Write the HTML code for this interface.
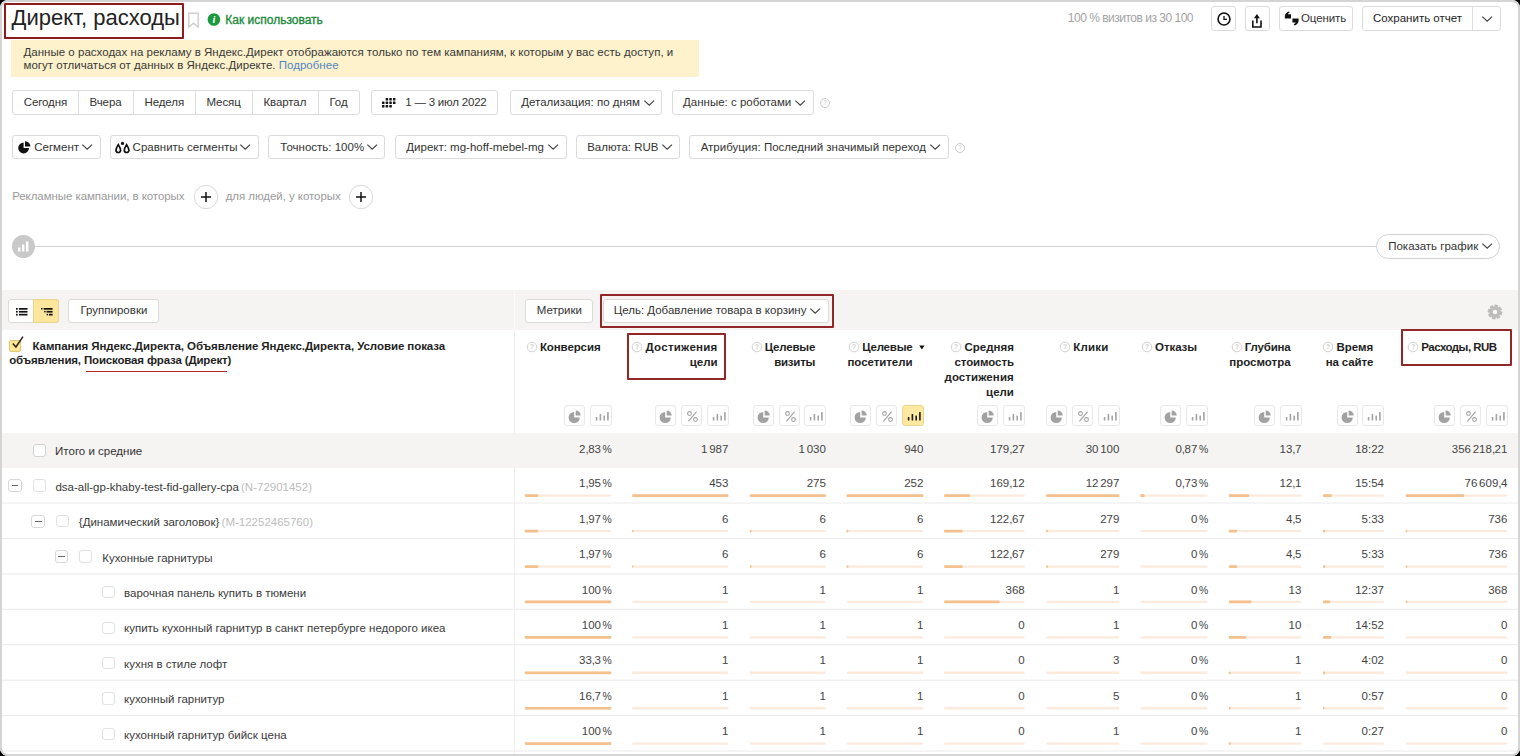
<!DOCTYPE html>
<html><head><meta charset="utf-8"><title>Директ, расходы</title>
<style>
html,body{margin:0;padding:0;background:#000;}
body{width:1520px;height:756px;overflow:hidden;position:relative;font-family:"Liberation Sans",sans-serif;}
#frame{position:absolute;left:0;top:0;width:1520px;height:756px;background:#fff;border-radius:8px;overflow:hidden;}
#edge{position:absolute;left:0;top:0;width:1520px;height:756px;box-sizing:border-box;border:2px solid #d4d4d4;border-radius:8px;}
.t{position:absolute;white-space:nowrap;font-family:"Liberation Sans",sans-serif;}
.b{position:absolute;box-sizing:border-box;background:#fff;border:1px solid #dbdbdb;border-radius:3px;}
.r{position:absolute;}
i{font-style:normal;}
svg{display:block;overflow:visible;}
</style></head><body><div id="frame">

<div class="b" style="left:4px;top:3px;width:179.5px;height:35.5px;border:2px solid #8a1c1c;border-radius:1px;background:transparent;"></div>
<div class="t" style="top:7.18px;font-size:22px;line-height:22px;color:#222;letter-spacing:0.02px;left:11.6px;">Директ, расходы</div>
<svg style="position:absolute;left:187px;top:12px" width="13" height="17" viewBox="0 0 13 17"><path d="M1.8 1.2 H11.2 V15 L6.5 11.2 L1.8 15 Z" fill="none" stroke="#cfcfcf" stroke-width="1.4"/></svg>
<svg style="position:absolute;left:207px;top:13px" width="14" height="14" viewBox="0 0 14 14"><circle cx="6.9" cy="6.5" r="6.3" fill="#1b9a3e"/><text x="6.9" y="10.3" font-family="Liberation Serif" font-weight="700" font-style="italic" font-size="10.5" text-anchor="middle" fill="#fff">i</text></svg>
<div class="t" style="top:13.74px;font-size:12px;line-height:12px;color:#1d8a3c;left:225.3px;-webkit-text-stroke:0.35px #1d8a3c;">Как использовать</div>
<div class="t" style="top:12.44px;font-size:12px;line-height:12px;color:#a3a3a3;letter-spacing:-0.5px;right:327.00px;">100 % визитов из 30 100</div>
<div class="b" style="left:1211px;top:6px;width:25px;height:25px;"><svg style="position:absolute;left:4.6px;top:5.3px" width="15" height="15" viewBox="0 0 15 15"><circle cx="7" cy="7" r="5.95" fill="none" stroke="#111" stroke-width="1.6"/><path d="M7 3.9 V7.4 H9.9" fill="none" stroke="#111" stroke-width="1.3"/></svg></div>
<div class="b" style="left:1245px;top:6px;width:25px;height:25px;"><svg style="position:absolute;left:5.4px;top:4.6px" width="14" height="17" viewBox="0 0 14 17"><path d="M1.8 8.6 V15 H10 V8.6" fill="none" stroke="#111" stroke-width="1.6"/><path d="M5.9 11.2 V5" stroke="#111" stroke-width="1.6" fill="none"/><path d="M2.9 6.2 L5.9 1.9 L8.9 6.2 Z" fill="#111"/></svg></div>
<div class="b" style="left:1279px;top:6px;width:74px;height:25px;"><svg style="position:absolute;left:3.6px;top:4.4px" width="16" height="15" viewBox="0 0 16 15"><path d="M0.8 5.4 C0.8 3 2.4 1.4 4.9 0.4 L5.6 1.6 C4.5 2.1 4 2.7 3.9 3.3 H7 V7.4 H0.8 Z" fill="#111"/><path d="M14.6 9.4 C14.6 11.8 13 13.4 10.5 14.4 L9.8 13.2 C10.9 12.7 11.4 12.1 11.5 11.5 H8.4 V7.4 H14.6 Z" fill="#111"/></svg></div>
<div class="t" style="top:12.57px;font-size:11.5px;line-height:11.5px;color:#333;letter-spacing:-0.1px;left:1301px;">Оценить</div>
<div class="b" style="left:1362px;top:6px;width:139px;height:25px;"></div>
<div class="r" style="left:1472px;top:7px;width:1px;height:23px;background:#dedede"></div>
<div class="t" style="top:12.57px;font-size:11.5px;line-height:11.5px;color:#222;left:1373px;">Сохранить отчет</div>
<svg style="position:absolute;left:1481.5px;top:16px" width="10.4" height="6.2" viewBox="0 0 10 6"><path d="M0.3 0.6 L5 5.0 L9.7 0.6" fill="none" stroke="#444" stroke-width="1.15"/></svg>
<div class="r" style="left:11px;top:40px;width:688px;height:37px;background:#fdf2cb;"></div>
<div class="t" style="top:46.57px;font-size:11.5px;line-height:11.5px;color:#383838;letter-spacing:0.018px;left:23.5px;">Данные о расходах на рекламу в Яндекс.Директ отображаются только по тем кампаниям, к которым у вас есть доступ, и</div>
<div class="t" style="top:59.57px;font-size:11.5px;line-height:11.5px;color:#383838;letter-spacing:0.018px;left:23.5px;">могут отличаться от данных в Яндекс.Директе. <span style="color:#4f86c6">Подробнее</span></div>
<div class="b" style="left:12px;top:90px;width:348px;height:25px;"></div>
<div class="r" style="left:78px;top:91px;width:1px;height:23px;background:#dedede"></div>
<div class="r" style="left:133px;top:91px;width:1px;height:23px;background:#dedede"></div>
<div class="r" style="left:195px;top:91px;width:1px;height:23px;background:#dedede"></div>
<div class="r" style="left:252px;top:91px;width:1px;height:23px;background:#dedede"></div>
<div class="r" style="left:318px;top:91px;width:1px;height:23px;background:#dedede"></div>
<div class="t" style="top:96.87px;font-size:11.5px;line-height:11.5px;color:#333;letter-spacing:-0.1px;left:23.7px;">Сегодня</div>
<div class="t" style="top:96.87px;font-size:11.5px;line-height:11.5px;color:#333;letter-spacing:-0.1px;left:89.5px;">Вчера</div>
<div class="t" style="top:96.87px;font-size:11.5px;line-height:11.5px;color:#333;letter-spacing:-0.1px;left:144.5px;">Неделя</div>
<div class="t" style="top:96.87px;font-size:11.5px;line-height:11.5px;color:#333;letter-spacing:-0.1px;left:206.5px;">Месяц</div>
<div class="t" style="top:96.87px;font-size:11.5px;line-height:11.5px;color:#333;letter-spacing:-0.1px;left:263.5px;">Квартал</div>
<div class="t" style="top:96.87px;font-size:11.5px;line-height:11.5px;color:#333;letter-spacing:-0.1px;left:329.5px;">Год</div>
<div class="b" style="left:371px;top:90px;width:127px;height:25px;"></div>
<svg style="position:absolute;left:382px;top:97.6px" width="14" height="10" viewBox="0 0 14 10"><rect x="3.65" y="0.00" width="2.5" height="2.5" rx="0.5" fill="#111"/><rect x="7.30" y="0.00" width="2.5" height="2.5" rx="0.5" fill="#111"/><rect x="10.95" y="0.00" width="2.5" height="2.5" rx="0.5" fill="#111"/><rect x="0.00" y="3.50" width="2.5" height="2.5" rx="0.5" fill="#111"/><rect x="3.65" y="3.50" width="2.5" height="2.5" rx="0.5" fill="#111"/><rect x="7.30" y="3.50" width="2.5" height="2.5" rx="0.5" fill="#111"/><rect x="10.95" y="3.50" width="2.5" height="2.5" rx="0.5" fill="#111"/><rect x="0.00" y="7.00" width="2.5" height="2.5" rx="0.5" fill="#111"/><rect x="3.65" y="7.00" width="2.5" height="2.5" rx="0.5" fill="#111"/><rect x="7.30" y="7.00" width="2.5" height="2.5" rx="0.5" fill="#111"/></svg>
<div class="t" style="top:96.87px;font-size:11.5px;line-height:11.5px;color:#333;letter-spacing:-0.2px;left:405.2px;">1 — 3 июл 2022</div>
<div class="b" style="left:510px;top:90px;width:152px;height:25px;"></div>
<div class="t" style="top:96.87px;font-size:11.5px;line-height:11.5px;color:#333;left:521.2px;">Детализация: по дням</div>
<svg style="position:absolute;left:644.3px;top:99.5px" width="10.4" height="6.2" viewBox="0 0 10 6"><path d="M0.3 0.6 L5 5.0 L9.7 0.6" fill="none" stroke="#444" stroke-width="1.15"/></svg>
<div class="b" style="left:672px;top:90px;width:142px;height:25px;"></div>
<div class="t" style="top:96.87px;font-size:11.5px;line-height:11.5px;color:#333;left:683px;">Данные: с роботами</div>
<svg style="position:absolute;left:795.2px;top:99.5px" width="10.4" height="6.2" viewBox="0 0 10 6"><path d="M0.3 0.6 L5 5.0 L9.7 0.6" fill="none" stroke="#444" stroke-width="1.15"/></svg>
<svg style="position:absolute;left:819.3px;top:97px" width="12" height="12" viewBox="0 0 12 12"><circle cx="6" cy="6" r="4.5" fill="#fff" stroke="#c4c4c4" stroke-width="0.9"/><text x="6" y="8.4" font-family="Liberation Sans" font-size="6.5" text-anchor="middle" fill="#c4c4c4">?</text></svg>
<div class="b" style="left:12px;top:135px;width:89px;height:24px;"></div>
<svg style="position:absolute;left:18px;top:140.8px" width="13" height="13" viewBox="0 0 13 13"><path d="M5.6 1.6 A5.4 5.4 0 1 0 11 7 H5.6 Z" fill="#111"/><path d="M7 0.2 A5.4 5.4 0 0 1 12.4 5.6 H7 Z" fill="#111"/></svg>
<div class="t" style="top:141.67px;font-size:11.5px;line-height:11.5px;color:#333;left:34.2px;">Сегмент</div>
<svg style="position:absolute;left:82px;top:144.3px" width="10.4" height="6.2" viewBox="0 0 10 6"><path d="M0.3 0.6 L5 5.0 L9.7 0.6" fill="none" stroke="#444" stroke-width="1.15"/></svg>
<div class="b" style="left:110px;top:135px;width:149px;height:24px;"></div>
<svg style="position:absolute;left:114.5px;top:140.5px" width="15" height="13" viewBox="0 0 15 13"><path d="M3.3 3.6 C1.7 6.2 1 7.6 1 9.2 A2.3 2.3 0 0 0 5.6 9.2 C5.6 7.6 4.9 6.2 3.3 3.6 Z" fill="none" stroke="#111" stroke-width="1.7"/><path d="M11.6 3.6 C10 6.2 9.3 7.6 9.3 9.2 A2.3 2.3 0 0 0 13.9 9.2 C13.9 7.6 13.2 6.2 11.6 3.6 Z" fill="none" stroke="#111" stroke-width="1.7"/><circle cx="7.5" cy="2.4" r="1.6" fill="#111"/></svg>
<div class="t" style="top:141.67px;font-size:11.5px;line-height:11.5px;color:#333;left:132.6px;">Сравнить сегменты</div>
<svg style="position:absolute;left:240.3px;top:144.3px" width="10.4" height="6.2" viewBox="0 0 10 6"><path d="M0.3 0.6 L5 5.0 L9.7 0.6" fill="none" stroke="#444" stroke-width="1.15"/></svg>
<div class="b" style="left:268px;top:135px;width:117px;height:24px;"></div>
<div class="t" style="top:141.67px;font-size:11.5px;line-height:11.5px;color:#333;left:280.3px;">Точность: 100%</div>
<svg style="position:absolute;left:366.8px;top:144.3px" width="10.4" height="6.2" viewBox="0 0 10 6"><path d="M0.3 0.6 L5 5.0 L9.7 0.6" fill="none" stroke="#444" stroke-width="1.15"/></svg>
<div class="b" style="left:395px;top:135px;width:172px;height:24px;"></div>
<div class="t" style="top:141.67px;font-size:11.5px;line-height:11.5px;color:#333;left:406.3px;">Директ: mg-hoff-mebel-mg</div>
<svg style="position:absolute;left:547.8px;top:144.3px" width="10.4" height="6.2" viewBox="0 0 10 6"><path d="M0.3 0.6 L5 5.0 L9.7 0.6" fill="none" stroke="#444" stroke-width="1.15"/></svg>
<div class="b" style="left:576px;top:135px;width:104px;height:24px;"></div>
<div class="t" style="top:141.67px;font-size:11.5px;line-height:11.5px;color:#333;left:587.2px;">Валюта: RUB</div>
<svg style="position:absolute;left:661.8px;top:144.3px" width="10.4" height="6.2" viewBox="0 0 10 6"><path d="M0.3 0.6 L5 5.0 L9.7 0.6" fill="none" stroke="#444" stroke-width="1.15"/></svg>
<div class="b" style="left:689px;top:135px;width:260px;height:24px;"></div>
<div class="t" style="top:141.67px;font-size:11.5px;line-height:11.5px;color:#333;left:700.7px;">Атрибуция: Последний значимый переход</div>
<svg style="position:absolute;left:929.6px;top:144.3px" width="10.4" height="6.2" viewBox="0 0 10 6"><path d="M0.3 0.6 L5 5.0 L9.7 0.6" fill="none" stroke="#444" stroke-width="1.15"/></svg>
<svg style="position:absolute;left:954.2px;top:142.1px" width="12" height="12" viewBox="0 0 12 12"><circle cx="6" cy="6" r="4.5" fill="#fff" stroke="#c4c4c4" stroke-width="0.9"/><text x="6" y="8.4" font-family="Liberation Sans" font-size="6.5" text-anchor="middle" fill="#c4c4c4">?</text></svg>
<div class="t" style="top:190.87px;font-size:11.5px;line-height:11.5px;color:#9a9a9a;letter-spacing:-0.07px;left:12.2px;">Рекламные кампании, в которых</div>
<div class="t" style="top:190.87px;font-size:11.5px;line-height:11.5px;color:#9a9a9a;letter-spacing:-0.05px;left:225.7px;">для людей, у которых</div>
<svg style="position:absolute;left:192.6px;top:184.4px" width="26" height="26" viewBox="0 0 26 26"><circle cx="13" cy="13" r="11.7" fill="#fff" stroke="#d9d9d9" stroke-width="1"/><path d="M8 13 H18 M13 8 V18" stroke="#111" stroke-width="1.5" fill="none"/></svg>
<svg style="position:absolute;left:347.9px;top:184.4px" width="26" height="26" viewBox="0 0 26 26"><circle cx="13" cy="13" r="11.7" fill="#fff" stroke="#d9d9d9" stroke-width="1"/><path d="M8 13 H18 M13 8 V18" stroke="#111" stroke-width="1.5" fill="none"/></svg>
<div class="r" style="left:30px;top:246px;width:1350px;height:1px;background:#d2d2d2"></div>
<svg style="position:absolute;left:11.5px;top:235px" width="23" height="23" viewBox="0 0 23 23"><circle cx="11.5" cy="11.5" r="11.5" fill="#c9c9c9"/><rect x="6" y="12.5" width="2.4" height="4" fill="#fff"/><rect x="10" y="9.5" width="2.4" height="7" fill="#fff"/><rect x="14" y="6.5" width="2.4" height="10" fill="#fff"/></svg>
<div class="b" style="left:1376px;top:234px;width:124px;height:25px;border-radius:12.5px;border-color:#d2d2d2;"></div>
<div class="t" style="top:240.67px;font-size:11.5px;line-height:11.5px;color:#333;left:1388.2px;">Показать график</div>
<svg style="position:absolute;left:1481.9px;top:243.2px" width="10.4" height="6.2" viewBox="0 0 10 6"><path d="M0.3 0.6 L5 5.0 L9.7 0.6" fill="none" stroke="#444" stroke-width="1.15"/></svg>
<div class="r" style="left:0;top:290px;width:1520px;height:40.4px;background:#f5f4f2"></div>
<div class="b" style="left:8px;top:299px;width:51px;height:24px;"></div>
<div class="r" style="left:33px;top:299px;width:26px;height:24px;box-sizing:border-box;background:#fee79c;border:1px solid #e7d38c;border-radius:0 3px 3px 0"></div>
<svg style="position:absolute;left:15.6px;top:307.7px" width="12" height="8" viewBox="0 0 12 8"><rect x="0" y="0.0" width="1.7" height="1.7" fill="#111"/><rect x="2.9" y="0.0" width="8.6" height="1.7" fill="#111"/><rect x="0" y="2.9" width="1.7" height="1.7" fill="#111"/><rect x="2.9" y="2.9" width="8.6" height="1.7" fill="#111"/><rect x="0" y="5.8" width="1.7" height="1.7" fill="#111"/><rect x="2.9" y="5.8" width="8.6" height="1.7" fill="#111"/></svg>
<svg style="position:absolute;left:40.6px;top:307.7px" width="12" height="8" viewBox="0 0 12 8"><rect x="0" y="0" width="1.5" height="1.5" fill="#111"/><rect x="2.6" y="0" width="9" height="1.7" fill="#111"/><rect x="3.2" y="2.9" width="1.5" height="1.5" fill="#111"/><rect x="5.6" y="2.9" width="6" height="1.7" fill="#111"/><rect x="5.6" y="5.8" width="1.5" height="1.5" fill="#111"/><rect x="8" y="5.8" width="3.6" height="1.7" fill="#111"/></svg>
<div class="b" style="left:68px;top:299px;width:91px;height:24px;"></div>
<div class="t" style="top:305.17px;font-size:11.5px;line-height:11.5px;color:#333;left:80.5px;">Группировки</div>
<div class="b" style="left:525px;top:299px;width:68px;height:24px;"></div>
<div class="t" style="top:305.17px;font-size:11.5px;line-height:11.5px;color:#333;left:536.7px;">Метрики</div>
<div class="b" style="left:603px;top:299px;width:226px;height:24px;"></div>
<div class="t" style="top:305.17px;font-size:11.5px;line-height:11.5px;color:#333;left:613.7px;">Цель: Добавление товара в корзину</div>
<svg style="position:absolute;left:810.2px;top:308px" width="10.4" height="6.2" viewBox="0 0 10 6"><path d="M0.3 0.6 L5 5.0 L9.7 0.6" fill="none" stroke="#444" stroke-width="1.15"/></svg>
<div class="b" style="left:600px;top:294px;width:234.4px;height:33.8px;border:2px solid #922727;border-radius:1px;background:transparent;"></div>
<svg style="position:absolute;left:1486.8px;top:303.9px" width="16" height="16" viewBox="-8 -8 16 16"><g fill="#bcbcbc"><rect x="-1.9" y="-7.3" width="3.8" height="4.2" rx="0.7" transform="rotate(12)"/><rect x="-1.9" y="-7.3" width="3.8" height="4.2" rx="0.7" transform="rotate(57)"/><rect x="-1.9" y="-7.3" width="3.8" height="4.2" rx="0.7" transform="rotate(102)"/><rect x="-1.9" y="-7.3" width="3.8" height="4.2" rx="0.7" transform="rotate(147)"/><rect x="-1.9" y="-7.3" width="3.8" height="4.2" rx="0.7" transform="rotate(192)"/><rect x="-1.9" y="-7.3" width="3.8" height="4.2" rx="0.7" transform="rotate(237)"/><rect x="-1.9" y="-7.3" width="3.8" height="4.2" rx="0.7" transform="rotate(282)"/><rect x="-1.9" y="-7.3" width="3.8" height="4.2" rx="0.7" transform="rotate(327)"/><circle r="5.3"/></g><circle r="2.25" fill="#f8f8f7"/></svg>
<div class="r" style="left:513.8px;top:330.4px;width:1px;height:426px;background:#ededed"></div>
<div class="r" style="left:513.8px;top:290px;width:1px;height:40.4px;background:#fbfbfa"></div>
<div class="r" style="left:9px;top:339.6px;width:12.4px;height:12.2px;box-sizing:border-box;background:#ffe594;border:1px solid #e0c877;border-radius:2px"></div>
<svg style="position:absolute;left:11px;top:335px" width="14" height="14" viewBox="0 0 14 14"><path d="M1.8 8.6 L4.9 12 L12 1.6" fill="none" stroke="#2a2116" stroke-width="1.5"/></svg>
<div class="t" style="top:341.37px;font-size:11.5px;line-height:11.5px;color:#1f1f1f;font-weight:700;letter-spacing:-0.07px;left:32.5px;">Кампания Яндекс.Директа, Объявление Яндекс.Директа, Условие показа</div>
<div class="t" style="top:355.17px;font-size:11.5px;line-height:11.5px;color:#1f1f1f;font-weight:700;letter-spacing:-0.16px;left:9.2px;">объявления, Поисковая фраза (Директ)</div>
<div class="r" style="left:85.5px;top:371px;width:141.2px;height:1.3px;background:#b52626"></div>
<div class="t" style="top:341.67px;font-size:11.5px;line-height:11.5px;color:#1f1f1f;font-weight:700;letter-spacing:-0.1px;right:919.50px;"><span style="position:relative;display:inline-block;width:13.4px;height:1px"><svg style="position:absolute;left:-0.7px;top:-8.9px" width="12" height="12" viewBox="0 0 12 12"><circle cx="6" cy="6" r="4.8" fill="#fff" stroke="#cdcdcd" stroke-width="0.9"/><text x="6" y="8.3" font-family="Liberation Sans" font-size="6.5" text-anchor="middle" fill="#cdcdcd">?</text></svg></span>Конверсия</div>
<div class="b" style="left:564px;top:405px;width:21px;height:21px;border-color:#e8e8e8;border-radius:3px;"><svg style="position:absolute;left:3.4px;top:3.6px" width="14" height="14" viewBox="0 0 14 14"><path d="M6.2 1.9 A5.6 5.6 0 1 0 11.8 7.5 H6.2 Z" fill="#a2a2a2"/><path d="M7.7 0.5 A5.0 5.0 0 0 1 12.7 5.5 H7.7 Z" fill="#a2a2a2"/></svg></div>
<div class="b" style="left:590px;top:405px;width:22px;height:21px;border-color:#e8e8e8;border-radius:3px;"><svg style="position:absolute;left:0;top:0" width="21" height="21" viewBox="0 0 21 21"><rect x="4.8" y="11.0" width="1.6" height="3.4" rx="0.5" fill="#a2a2a2"/><rect x="8.6" y="8.1" width="1.6" height="6.3" rx="0.5" fill="#a2a2a2"/><rect x="12.4" y="9.5" width="1.6" height="4.9" rx="0.5" fill="#a2a2a2"/><rect x="16.1" y="6.1" width="1.6" height="8.3" rx="0.5" fill="#a2a2a2"/></svg></div>
<div class="t" style="top:341.67px;font-size:11.5px;line-height:11.5px;color:#1f1f1f;font-weight:700;letter-spacing:0.27px;right:802.40px;"><span style="position:relative;display:inline-block;width:13.4px;height:1px"><svg style="position:absolute;left:-0.7px;top:-8.9px" width="12" height="12" viewBox="0 0 12 12"><circle cx="6" cy="6" r="4.8" fill="#fff" stroke="#cdcdcd" stroke-width="0.9"/><text x="6" y="8.3" font-family="Liberation Sans" font-size="6.5" text-anchor="middle" fill="#cdcdcd">?</text></svg></span>Достижения</div>
<div class="t" style="top:356.67px;font-size:11.5px;line-height:11.5px;color:#1f1f1f;font-weight:700;right:802.40px;">цели</div>
<div class="b" style="left:655px;top:405px;width:21px;height:21px;border-color:#e8e8e8;border-radius:3px;"><svg style="position:absolute;left:3.4px;top:3.6px" width="14" height="14" viewBox="0 0 14 14"><path d="M6.2 1.9 A5.6 5.6 0 1 0 11.8 7.5 H6.2 Z" fill="#a2a2a2"/><path d="M7.7 0.5 A5.0 5.0 0 0 1 12.7 5.5 H7.7 Z" fill="#a2a2a2"/></svg></div>
<div class="b" style="left:681px;top:405px;width:21px;height:21px;border-color:#e8e8e8;border-radius:3px;"><svg style="position:absolute;left:4.8px;top:4.8px" width="11" height="11" viewBox="0 0 11 11"><circle cx="2.5" cy="2.5" r="1.9" fill="none" stroke="#a2a2a2" stroke-width="1.05"/><circle cx="8.5" cy="8.5" r="1.9" fill="none" stroke="#a2a2a2" stroke-width="1.05"/><path d="M9.6 0.6 L1.4 10.4" stroke="#a2a2a2" stroke-width="1.1"/></svg></div>
<div class="b" style="left:707px;top:405px;width:22px;height:21px;border-color:#e8e8e8;border-radius:3px;"><svg style="position:absolute;left:0;top:0" width="21" height="21" viewBox="0 0 21 21"><rect x="4.8" y="11.0" width="1.6" height="3.4" rx="0.5" fill="#a2a2a2"/><rect x="8.6" y="8.1" width="1.6" height="6.3" rx="0.5" fill="#a2a2a2"/><rect x="12.4" y="9.5" width="1.6" height="4.9" rx="0.5" fill="#a2a2a2"/><rect x="16.1" y="6.1" width="1.6" height="8.3" rx="0.5" fill="#a2a2a2"/></svg></div>
<div class="t" style="top:341.67px;font-size:11.5px;line-height:11.5px;color:#1f1f1f;font-weight:700;letter-spacing:-0.2px;right:704.90px;"><span style="position:relative;display:inline-block;width:13.4px;height:1px"><svg style="position:absolute;left:-0.7px;top:-8.9px" width="12" height="12" viewBox="0 0 12 12"><circle cx="6" cy="6" r="4.8" fill="#fff" stroke="#cdcdcd" stroke-width="0.9"/><text x="6" y="8.3" font-family="Liberation Sans" font-size="6.5" text-anchor="middle" fill="#cdcdcd">?</text></svg></span>Целевые</div>
<div class="t" style="top:356.67px;font-size:11.5px;line-height:11.5px;color:#1f1f1f;font-weight:700;letter-spacing:-0.25px;right:704.90px;">визиты</div>
<div class="b" style="left:753px;top:405px;width:21px;height:21px;border-color:#e8e8e8;border-radius:3px;"><svg style="position:absolute;left:3.4px;top:3.6px" width="14" height="14" viewBox="0 0 14 14"><path d="M6.2 1.9 A5.6 5.6 0 1 0 11.8 7.5 H6.2 Z" fill="#a2a2a2"/><path d="M7.7 0.5 A5.0 5.0 0 0 1 12.7 5.5 H7.7 Z" fill="#a2a2a2"/></svg></div>
<div class="b" style="left:779px;top:405px;width:21px;height:21px;border-color:#e8e8e8;border-radius:3px;"><svg style="position:absolute;left:4.8px;top:4.8px" width="11" height="11" viewBox="0 0 11 11"><circle cx="2.5" cy="2.5" r="1.9" fill="none" stroke="#a2a2a2" stroke-width="1.05"/><circle cx="8.5" cy="8.5" r="1.9" fill="none" stroke="#a2a2a2" stroke-width="1.05"/><path d="M9.6 0.6 L1.4 10.4" stroke="#a2a2a2" stroke-width="1.1"/></svg></div>
<div class="b" style="left:804px;top:405px;width:22px;height:21px;border-color:#e8e8e8;border-radius:3px;"><svg style="position:absolute;left:0;top:0" width="21" height="21" viewBox="0 0 21 21"><rect x="4.8" y="11.0" width="1.6" height="3.4" rx="0.5" fill="#a2a2a2"/><rect x="8.6" y="8.1" width="1.6" height="6.3" rx="0.5" fill="#a2a2a2"/><rect x="12.4" y="9.5" width="1.6" height="4.9" rx="0.5" fill="#a2a2a2"/><rect x="16.1" y="6.1" width="1.6" height="8.3" rx="0.5" fill="#a2a2a2"/></svg></div>
<div class="t" style="top:341.67px;font-size:11.5px;line-height:11.5px;color:#1f1f1f;font-weight:700;letter-spacing:-0.2px;right:607.50px;"><span style="position:relative;display:inline-block;width:13.4px;height:1px"><svg style="position:absolute;left:-0.7px;top:-8.9px" width="12" height="12" viewBox="0 0 12 12"><circle cx="6" cy="6" r="4.8" fill="#fff" stroke="#cdcdcd" stroke-width="0.9"/><text x="6" y="8.3" font-family="Liberation Sans" font-size="6.5" text-anchor="middle" fill="#cdcdcd">?</text></svg></span>Целевые</div>
<div class="t" style="top:356.67px;font-size:11.5px;line-height:11.5px;color:#1f1f1f;font-weight:700;letter-spacing:-0.05px;right:607.50px;">посетители</div>
<div class="b" style="left:850px;top:405px;width:21px;height:21px;border-color:#e8e8e8;border-radius:3px;"><svg style="position:absolute;left:3.4px;top:3.6px" width="14" height="14" viewBox="0 0 14 14"><path d="M6.2 1.9 A5.6 5.6 0 1 0 11.8 7.5 H6.2 Z" fill="#a2a2a2"/><path d="M7.7 0.5 A5.0 5.0 0 0 1 12.7 5.5 H7.7 Z" fill="#a2a2a2"/></svg></div>
<div class="b" style="left:876px;top:405px;width:21px;height:21px;border-color:#e8e8e8;border-radius:3px;"><svg style="position:absolute;left:4.8px;top:4.8px" width="11" height="11" viewBox="0 0 11 11"><circle cx="2.5" cy="2.5" r="1.9" fill="none" stroke="#a2a2a2" stroke-width="1.05"/><circle cx="8.5" cy="8.5" r="1.9" fill="none" stroke="#a2a2a2" stroke-width="1.05"/><path d="M9.6 0.6 L1.4 10.4" stroke="#a2a2a2" stroke-width="1.1"/></svg></div>
<div class="b" style="left:902px;top:405px;width:22px;height:21px;background:#ffe9a0;border-color:#ead590;border-radius:3px;"><svg style="position:absolute;left:0;top:0" width="21" height="21" viewBox="0 0 21 21"><rect x="4.8" y="11.0" width="1.6" height="3.4" rx="0.5" fill="#1a1a1a"/><rect x="8.6" y="8.1" width="1.6" height="6.3" rx="0.5" fill="#1a1a1a"/><rect x="12.4" y="9.5" width="1.6" height="4.9" rx="0.5" fill="#1a1a1a"/><rect x="16.1" y="6.1" width="1.6" height="8.3" rx="0.5" fill="#1a1a1a"/></svg></div>
<div class="t" style="top:341.67px;font-size:11.5px;line-height:11.5px;color:#1f1f1f;font-weight:700;right:506.10px;"><span style="position:relative;display:inline-block;width:13.4px;height:1px"><svg style="position:absolute;left:-0.7px;top:-8.9px" width="12" height="12" viewBox="0 0 12 12"><circle cx="6" cy="6" r="4.8" fill="#fff" stroke="#cdcdcd" stroke-width="0.9"/><text x="6" y="8.3" font-family="Liberation Sans" font-size="6.5" text-anchor="middle" fill="#cdcdcd">?</text></svg></span>Средняя</div>
<div class="t" style="top:356.67px;font-size:11.5px;line-height:11.5px;color:#1f1f1f;font-weight:700;letter-spacing:-0.1px;right:506.10px;">стоимость</div>
<div class="t" style="top:371.67px;font-size:11.5px;line-height:11.5px;color:#1f1f1f;font-weight:700;letter-spacing:0.1px;right:506.10px;">достижения</div>
<div class="t" style="top:386.67px;font-size:11.5px;line-height:11.5px;color:#1f1f1f;font-weight:700;right:506.10px;">цели</div>
<div class="b" style="left:977px;top:405px;width:21px;height:21px;border-color:#e8e8e8;border-radius:3px;"><svg style="position:absolute;left:3.4px;top:3.6px" width="14" height="14" viewBox="0 0 14 14"><path d="M6.2 1.9 A5.6 5.6 0 1 0 11.8 7.5 H6.2 Z" fill="#a2a2a2"/><path d="M7.7 0.5 A5.0 5.0 0 0 1 12.7 5.5 H7.7 Z" fill="#a2a2a2"/></svg></div>
<div class="b" style="left:1003px;top:405px;width:22px;height:21px;border-color:#e8e8e8;border-radius:3px;"><svg style="position:absolute;left:0;top:0" width="21" height="21" viewBox="0 0 21 21"><rect x="4.8" y="11.0" width="1.6" height="3.4" rx="0.5" fill="#a2a2a2"/><rect x="8.6" y="8.1" width="1.6" height="6.3" rx="0.5" fill="#a2a2a2"/><rect x="12.4" y="9.5" width="1.6" height="4.9" rx="0.5" fill="#a2a2a2"/><rect x="16.1" y="6.1" width="1.6" height="8.3" rx="0.5" fill="#a2a2a2"/></svg></div>
<div class="t" style="top:341.67px;font-size:11.5px;line-height:11.5px;color:#1f1f1f;font-weight:700;letter-spacing:0.25px;right:411.40px;"><span style="position:relative;display:inline-block;width:13.4px;height:1px"><svg style="position:absolute;left:-0.7px;top:-8.9px" width="12" height="12" viewBox="0 0 12 12"><circle cx="6" cy="6" r="4.8" fill="#fff" stroke="#cdcdcd" stroke-width="0.9"/><text x="6" y="8.3" font-family="Liberation Sans" font-size="6.5" text-anchor="middle" fill="#cdcdcd">?</text></svg></span>Клики</div>
<div class="b" style="left:1046px;top:405px;width:21px;height:21px;border-color:#e8e8e8;border-radius:3px;"><svg style="position:absolute;left:3.4px;top:3.6px" width="14" height="14" viewBox="0 0 14 14"><path d="M6.2 1.9 A5.6 5.6 0 1 0 11.8 7.5 H6.2 Z" fill="#a2a2a2"/><path d="M7.7 0.5 A5.0 5.0 0 0 1 12.7 5.5 H7.7 Z" fill="#a2a2a2"/></svg></div>
<div class="b" style="left:1072px;top:405px;width:21px;height:21px;border-color:#e8e8e8;border-radius:3px;"><svg style="position:absolute;left:4.8px;top:4.8px" width="11" height="11" viewBox="0 0 11 11"><circle cx="2.5" cy="2.5" r="1.9" fill="none" stroke="#a2a2a2" stroke-width="1.05"/><circle cx="8.5" cy="8.5" r="1.9" fill="none" stroke="#a2a2a2" stroke-width="1.05"/><path d="M9.6 0.6 L1.4 10.4" stroke="#a2a2a2" stroke-width="1.1"/></svg></div>
<div class="b" style="left:1098px;top:405px;width:22px;height:21px;border-color:#e8e8e8;border-radius:3px;"><svg style="position:absolute;left:0;top:0" width="21" height="21" viewBox="0 0 21 21"><rect x="4.8" y="11.0" width="1.6" height="3.4" rx="0.5" fill="#a2a2a2"/><rect x="8.6" y="8.1" width="1.6" height="6.3" rx="0.5" fill="#a2a2a2"/><rect x="12.4" y="9.5" width="1.6" height="4.9" rx="0.5" fill="#a2a2a2"/><rect x="16.1" y="6.1" width="1.6" height="8.3" rx="0.5" fill="#a2a2a2"/></svg></div>
<div class="t" style="top:341.67px;font-size:11.5px;line-height:11.5px;color:#1f1f1f;font-weight:700;letter-spacing:-0.1px;right:323.10px;"><span style="position:relative;display:inline-block;width:13.4px;height:1px"><svg style="position:absolute;left:-0.7px;top:-8.9px" width="12" height="12" viewBox="0 0 12 12"><circle cx="6" cy="6" r="4.8" fill="#fff" stroke="#cdcdcd" stroke-width="0.9"/><text x="6" y="8.3" font-family="Liberation Sans" font-size="6.5" text-anchor="middle" fill="#cdcdcd">?</text></svg></span>Отказы</div>
<div class="b" style="left:1160px;top:405px;width:21px;height:21px;border-color:#e8e8e8;border-radius:3px;"><svg style="position:absolute;left:3.4px;top:3.6px" width="14" height="14" viewBox="0 0 14 14"><path d="M6.2 1.9 A5.6 5.6 0 1 0 11.8 7.5 H6.2 Z" fill="#a2a2a2"/><path d="M7.7 0.5 A5.0 5.0 0 0 1 12.7 5.5 H7.7 Z" fill="#a2a2a2"/></svg></div>
<div class="b" style="left:1186px;top:405px;width:22px;height:21px;border-color:#e8e8e8;border-radius:3px;"><svg style="position:absolute;left:0;top:0" width="21" height="21" viewBox="0 0 21 21"><rect x="4.8" y="11.0" width="1.6" height="3.4" rx="0.5" fill="#a2a2a2"/><rect x="8.6" y="8.1" width="1.6" height="6.3" rx="0.5" fill="#a2a2a2"/><rect x="12.4" y="9.5" width="1.6" height="4.9" rx="0.5" fill="#a2a2a2"/><rect x="16.1" y="6.1" width="1.6" height="8.3" rx="0.5" fill="#a2a2a2"/></svg></div>
<div class="t" style="top:341.67px;font-size:11.5px;line-height:11.5px;color:#1f1f1f;font-weight:700;letter-spacing:-0.15px;right:229.40px;"><span style="position:relative;display:inline-block;width:13.4px;height:1px"><svg style="position:absolute;left:-0.7px;top:-8.9px" width="12" height="12" viewBox="0 0 12 12"><circle cx="6" cy="6" r="4.8" fill="#fff" stroke="#cdcdcd" stroke-width="0.9"/><text x="6" y="8.3" font-family="Liberation Sans" font-size="6.5" text-anchor="middle" fill="#cdcdcd">?</text></svg></span>Глубина</div>
<div class="t" style="top:356.67px;font-size:11.5px;line-height:11.5px;color:#1f1f1f;font-weight:700;right:229.40px;">просмотра</div>
<div class="b" style="left:1254px;top:405px;width:21px;height:21px;border-color:#e8e8e8;border-radius:3px;"><svg style="position:absolute;left:3.4px;top:3.6px" width="14" height="14" viewBox="0 0 14 14"><path d="M6.2 1.9 A5.6 5.6 0 1 0 11.8 7.5 H6.2 Z" fill="#a2a2a2"/><path d="M7.7 0.5 A5.0 5.0 0 0 1 12.7 5.5 H7.7 Z" fill="#a2a2a2"/></svg></div>
<div class="b" style="left:1280px;top:405px;width:22px;height:21px;border-color:#e8e8e8;border-radius:3px;"><svg style="position:absolute;left:0;top:0" width="21" height="21" viewBox="0 0 21 21"><rect x="4.8" y="11.0" width="1.6" height="3.4" rx="0.5" fill="#a2a2a2"/><rect x="8.6" y="8.1" width="1.6" height="6.3" rx="0.5" fill="#a2a2a2"/><rect x="12.4" y="9.5" width="1.6" height="4.9" rx="0.5" fill="#a2a2a2"/><rect x="16.1" y="6.1" width="1.6" height="8.3" rx="0.5" fill="#a2a2a2"/></svg></div>
<div class="t" style="top:341.67px;font-size:11.5px;line-height:11.5px;color:#1f1f1f;font-weight:700;right:146.80px;"><span style="position:relative;display:inline-block;width:13.4px;height:1px"><svg style="position:absolute;left:-0.7px;top:-8.9px" width="12" height="12" viewBox="0 0 12 12"><circle cx="6" cy="6" r="4.8" fill="#fff" stroke="#cdcdcd" stroke-width="0.9"/><text x="6" y="8.3" font-family="Liberation Sans" font-size="6.5" text-anchor="middle" fill="#cdcdcd">?</text></svg></span>Время</div>
<div class="t" style="top:356.67px;font-size:11.5px;line-height:11.5px;color:#1f1f1f;font-weight:700;letter-spacing:-0.13px;right:146.80px;">на сайте</div>
<div class="b" style="left:1337px;top:405px;width:21px;height:21px;border-color:#e8e8e8;border-radius:3px;"><svg style="position:absolute;left:3.4px;top:3.6px" width="14" height="14" viewBox="0 0 14 14"><path d="M6.2 1.9 A5.6 5.6 0 1 0 11.8 7.5 H6.2 Z" fill="#a2a2a2"/><path d="M7.7 0.5 A5.0 5.0 0 0 1 12.7 5.5 H7.7 Z" fill="#a2a2a2"/></svg></div>
<div class="b" style="left:1362px;top:405px;width:22px;height:21px;border-color:#e8e8e8;border-radius:3px;"><svg style="position:absolute;left:0;top:0" width="21" height="21" viewBox="0 0 21 21"><rect x="4.8" y="11.0" width="1.6" height="3.4" rx="0.5" fill="#a2a2a2"/><rect x="8.6" y="8.1" width="1.6" height="6.3" rx="0.5" fill="#a2a2a2"/><rect x="12.4" y="9.5" width="1.6" height="4.9" rx="0.5" fill="#a2a2a2"/><rect x="16.1" y="6.1" width="1.6" height="8.3" rx="0.5" fill="#a2a2a2"/></svg></div>
<div class="t" style="top:341.67px;font-size:11.5px;line-height:11.5px;color:#1f1f1f;font-weight:700;letter-spacing:-0.52px;right:23.40px;"><span style="position:relative;display:inline-block;width:13.4px;height:1px"><svg style="position:absolute;left:-0.7px;top:-8.9px" width="12" height="12" viewBox="0 0 12 12"><circle cx="6" cy="6" r="4.8" fill="#fff" stroke="#cdcdcd" stroke-width="0.9"/><text x="6" y="8.3" font-family="Liberation Sans" font-size="6.5" text-anchor="middle" fill="#cdcdcd">?</text></svg></span>Расходы, RUB</div>
<div class="b" style="left:1434px;top:405px;width:21px;height:21px;border-color:#e8e8e8;border-radius:3px;"><svg style="position:absolute;left:3.4px;top:3.6px" width="14" height="14" viewBox="0 0 14 14"><path d="M6.2 1.9 A5.6 5.6 0 1 0 11.8 7.5 H6.2 Z" fill="#a2a2a2"/><path d="M7.7 0.5 A5.0 5.0 0 0 1 12.7 5.5 H7.7 Z" fill="#a2a2a2"/></svg></div>
<div class="b" style="left:1460px;top:405px;width:21px;height:21px;border-color:#e8e8e8;border-radius:3px;"><svg style="position:absolute;left:4.8px;top:4.8px" width="11" height="11" viewBox="0 0 11 11"><circle cx="2.5" cy="2.5" r="1.9" fill="none" stroke="#a2a2a2" stroke-width="1.05"/><circle cx="8.5" cy="8.5" r="1.9" fill="none" stroke="#a2a2a2" stroke-width="1.05"/><path d="M9.6 0.6 L1.4 10.4" stroke="#a2a2a2" stroke-width="1.1"/></svg></div>
<div class="b" style="left:1486px;top:405px;width:22px;height:21px;border-color:#e8e8e8;border-radius:3px;"><svg style="position:absolute;left:0;top:0" width="21" height="21" viewBox="0 0 21 21"><rect x="4.8" y="11.0" width="1.6" height="3.4" rx="0.5" fill="#a2a2a2"/><rect x="8.6" y="8.1" width="1.6" height="6.3" rx="0.5" fill="#a2a2a2"/><rect x="12.4" y="9.5" width="1.6" height="4.9" rx="0.5" fill="#a2a2a2"/><rect x="16.1" y="6.1" width="1.6" height="8.3" rx="0.5" fill="#a2a2a2"/></svg></div>
<svg style="position:absolute;left:919.4px;top:345px" width="6" height="5" viewBox="0 0 6 5"><path d="M0.2 0.4 H5.6 L2.9 4.4 Z" fill="#111"/></svg>
<div class="b" style="left:627px;top:333px;width:99.4px;height:47.4px;border:2px solid #922727;border-radius:1px;background:transparent;"></div>
<div class="b" style="left:1401px;top:329px;width:111px;height:37.4px;border:2px solid #922727;border-radius:1px;background:transparent;"></div>
<div class="r" style="left:0;top:432.6px;width:1520px;height:35px;background:#f5f4f2"></div>
<svg style="position:absolute;left:0;top:0" width="1520" height="756" viewBox="0 0 1520 756"><rect x="0" y="502.5" width="1520" height="1" fill="#ebebeb"/><rect x="0" y="538.0" width="1520" height="1" fill="#ebebeb"/><rect x="0" y="573.4" width="1520" height="1" fill="#ebebeb"/><rect x="0" y="608.8" width="1520" height="1" fill="#ebebeb"/><rect x="0" y="644.2" width="1520" height="1" fill="#ebebeb"/><rect x="0" y="679.7" width="1520" height="1" fill="#ebebeb"/><rect x="0" y="715.1" width="1520" height="1" fill="#ebebeb"/><rect x="0" y="750.5" width="1520" height="1" fill="#ebebeb"/></svg>
<div class="r" style="left:32.6px;top:444.3px;width:13px;height:12.4px;box-sizing:border-box;background:#fff;border:1px solid #d2d2d2;border-radius:3px"></div>
<div class="t" style="top:446.17px;font-size:11.5px;line-height:11.5px;color:#333;left:55.1px;">Итого и средние</div>
<div class="t" style="top:444.37px;font-size:11.5px;line-height:11.5px;color:#444;right:908.70px;">2<i style="letter-spacing:-0.5px">,</i>83<i style="letter-spacing:-1.6px"> </i><i style="font-size:10.4px;letter-spacing:-0.5px">%</i></div>
<div class="t" style="top:444.37px;font-size:11.5px;line-height:11.5px;color:#444;right:791.60px;">1<i style="letter-spacing:-1.4px"> </i>987</div>
<div class="t" style="top:444.37px;font-size:11.5px;line-height:11.5px;color:#444;right:694.10px;">1<i style="letter-spacing:-1.4px"> </i>030</div>
<div class="t" style="top:444.37px;font-size:11.5px;line-height:11.5px;color:#444;right:596.70px;">940</div>
<div class="t" style="top:444.37px;font-size:11.5px;line-height:11.5px;color:#444;right:495.30px;">179<i style="letter-spacing:-0.5px">,</i>27</div>
<div class="t" style="top:444.37px;font-size:11.5px;line-height:11.5px;color:#444;right:400.60px;">30<i style="letter-spacing:-1.4px"> </i>100</div>
<div class="t" style="top:444.37px;font-size:11.5px;line-height:11.5px;color:#444;right:312.30px;">0<i style="letter-spacing:-0.5px">,</i>87<i style="letter-spacing:-1.6px"> </i><i style="font-size:10.4px;letter-spacing:-0.5px">%</i></div>
<div class="t" style="top:444.37px;font-size:11.5px;line-height:11.5px;color:#444;right:218.60px;">13<i style="letter-spacing:-0.5px">,</i>7</div>
<div class="t" style="top:444.37px;font-size:11.5px;line-height:11.5px;color:#444;right:136.00px;">18:22</div>
<div class="t" style="top:444.37px;font-size:11.5px;line-height:11.5px;color:#444;right:12.60px;">356<i style="letter-spacing:-1.4px"> </i>218<i style="letter-spacing:-0.5px">,</i>21</div>
<div class="r" style="left:8.0px;top:479.2px;width:13.7px;height:13.2px;box-sizing:border-box;background:#fff;border:1px solid #d8d8d8;border-radius:3px"></div><div class="r" style="left:11.6px;top:485.2px;width:6.6px;height:1.3px;background:#666"></div>
<div class="r" style="left:32.6px;top:479.4px;width:13px;height:12.4px;box-sizing:border-box;background:#fff;border:1px solid #e1e1e1;border-radius:3px"></div>
<div class="t" style="top:481.67px;font-size:11.5px;line-height:11.5px;color:#3a3a3a;left:55.4px;">dsa-all-gp-khaby-test-fid-gallery-cpa<span style="color:#bdbdbd;margin-left:2.2px">(N-72901452)</span></div>
<div class="t" style="top:478.27px;font-size:11.5px;line-height:11.5px;color:#444;right:908.70px;">1<i style="letter-spacing:-0.5px">,</i>95<i style="letter-spacing:-1.6px"> </i><i style="font-size:10.4px;letter-spacing:-0.5px">%</i></div>
<div class="t" style="top:478.27px;font-size:11.5px;line-height:11.5px;color:#444;right:791.60px;">453</div>
<div class="t" style="top:478.27px;font-size:11.5px;line-height:11.5px;color:#444;right:694.10px;">275</div>
<div class="t" style="top:478.27px;font-size:11.5px;line-height:11.5px;color:#444;right:596.70px;">252</div>
<div class="t" style="top:478.27px;font-size:11.5px;line-height:11.5px;color:#444;right:495.30px;">169<i style="letter-spacing:-0.5px">,</i>12</div>
<div class="t" style="top:478.27px;font-size:11.5px;line-height:11.5px;color:#444;right:400.60px;">12<i style="letter-spacing:-1.4px"> </i>297</div>
<div class="t" style="top:478.27px;font-size:11.5px;line-height:11.5px;color:#444;right:312.30px;">0<i style="letter-spacing:-0.5px">,</i>73<i style="letter-spacing:-1.6px"> </i><i style="font-size:10.4px;letter-spacing:-0.5px">%</i></div>
<div class="t" style="top:478.27px;font-size:11.5px;line-height:11.5px;color:#444;right:218.60px;">12<i style="letter-spacing:-0.5px">,</i>1</div>
<div class="t" style="top:478.27px;font-size:11.5px;line-height:11.5px;color:#444;right:136.00px;">15:54</div>
<div class="t" style="top:478.27px;font-size:11.5px;line-height:11.5px;color:#444;right:12.60px;">76<i style="letter-spacing:-1.4px"> </i>609<i style="letter-spacing:-0.5px">,</i>4</div>
<div class="r" style="left:31.4px;top:514.6px;width:13.7px;height:13.2px;box-sizing:border-box;background:#fff;border:1px solid #d8d8d8;border-radius:3px"></div><div class="r" style="left:35.0px;top:520.6px;width:6.6px;height:1.3px;background:#666"></div>
<div class="r" style="left:56.0px;top:514.8px;width:13px;height:12.4px;box-sizing:border-box;background:#fff;border:1px solid #e1e1e1;border-radius:3px"></div>
<div class="t" style="top:517.10px;font-size:11.5px;line-height:11.5px;color:#3a3a3a;left:78.8px;">{Динамический заголовок}<span style="color:#bdbdbd;margin-left:2.2px">(M-12252465760)</span></div>
<div class="t" style="top:513.70px;font-size:11.5px;line-height:11.5px;color:#444;right:908.70px;">1<i style="letter-spacing:-0.5px">,</i>97<i style="letter-spacing:-1.6px"> </i><i style="font-size:10.4px;letter-spacing:-0.5px">%</i></div>
<div class="t" style="top:513.70px;font-size:11.5px;line-height:11.5px;color:#444;right:791.60px;">6</div>
<div class="t" style="top:513.70px;font-size:11.5px;line-height:11.5px;color:#444;right:694.10px;">6</div>
<div class="t" style="top:513.70px;font-size:11.5px;line-height:11.5px;color:#444;right:596.70px;">6</div>
<div class="t" style="top:513.70px;font-size:11.5px;line-height:11.5px;color:#444;right:495.30px;">122<i style="letter-spacing:-0.5px">,</i>67</div>
<div class="t" style="top:513.70px;font-size:11.5px;line-height:11.5px;color:#444;right:400.60px;">279</div>
<div class="t" style="top:513.70px;font-size:11.5px;line-height:11.5px;color:#444;right:312.30px;">0<i style="letter-spacing:-1.6px"> </i><i style="font-size:10.4px;letter-spacing:-0.5px">%</i></div>
<div class="t" style="top:513.70px;font-size:11.5px;line-height:11.5px;color:#444;right:218.60px;">4<i style="letter-spacing:-0.5px">,</i>5</div>
<div class="t" style="top:513.70px;font-size:11.5px;line-height:11.5px;color:#444;right:136.00px;">5:33</div>
<div class="t" style="top:513.70px;font-size:11.5px;line-height:11.5px;color:#444;right:12.60px;">736</div>
<div class="r" style="left:54.8px;top:550.1px;width:13.7px;height:13.2px;box-sizing:border-box;background:#fff;border:1px solid #d8d8d8;border-radius:3px"></div><div class="r" style="left:58.4px;top:556.1px;width:6.6px;height:1.3px;background:#666"></div>
<div class="r" style="left:79.4px;top:550.3px;width:13px;height:12.4px;box-sizing:border-box;background:#fff;border:1px solid #e1e1e1;border-radius:3px"></div>
<div class="t" style="top:552.53px;font-size:11.5px;line-height:11.5px;color:#3a3a3a;left:102.2px;">Кухонные гарнитуры</div>
<div class="t" style="top:549.13px;font-size:11.5px;line-height:11.5px;color:#444;right:908.70px;">1<i style="letter-spacing:-0.5px">,</i>97<i style="letter-spacing:-1.6px"> </i><i style="font-size:10.4px;letter-spacing:-0.5px">%</i></div>
<div class="t" style="top:549.13px;font-size:11.5px;line-height:11.5px;color:#444;right:791.60px;">6</div>
<div class="t" style="top:549.13px;font-size:11.5px;line-height:11.5px;color:#444;right:694.10px;">6</div>
<div class="t" style="top:549.13px;font-size:11.5px;line-height:11.5px;color:#444;right:596.70px;">6</div>
<div class="t" style="top:549.13px;font-size:11.5px;line-height:11.5px;color:#444;right:495.30px;">122<i style="letter-spacing:-0.5px">,</i>67</div>
<div class="t" style="top:549.13px;font-size:11.5px;line-height:11.5px;color:#444;right:400.60px;">279</div>
<div class="t" style="top:549.13px;font-size:11.5px;line-height:11.5px;color:#444;right:312.30px;">0<i style="letter-spacing:-1.6px"> </i><i style="font-size:10.4px;letter-spacing:-0.5px">%</i></div>
<div class="t" style="top:549.13px;font-size:11.5px;line-height:11.5px;color:#444;right:218.60px;">4<i style="letter-spacing:-0.5px">,</i>5</div>
<div class="t" style="top:549.13px;font-size:11.5px;line-height:11.5px;color:#444;right:136.00px;">5:33</div>
<div class="t" style="top:549.13px;font-size:11.5px;line-height:11.5px;color:#444;right:12.60px;">736</div>
<div class="r" style="left:101.6px;top:586.1px;width:13px;height:12.4px;box-sizing:border-box;background:#fff;border:1px solid #e1e1e1;border-radius:3px"></div>
<div class="t" style="top:587.96px;font-size:11.5px;line-height:11.5px;color:#3a3a3a;left:124.0px;">варочная панель купить в тюмени</div>
<div class="t" style="top:584.56px;font-size:11.5px;line-height:11.5px;color:#444;right:908.70px;">100<i style="letter-spacing:-1.6px"> </i><i style="font-size:10.4px;letter-spacing:-0.5px">%</i></div>
<div class="t" style="top:584.56px;font-size:11.5px;line-height:11.5px;color:#444;right:791.60px;">1</div>
<div class="t" style="top:584.56px;font-size:11.5px;line-height:11.5px;color:#444;right:694.10px;">1</div>
<div class="t" style="top:584.56px;font-size:11.5px;line-height:11.5px;color:#444;right:596.70px;">1</div>
<div class="t" style="top:584.56px;font-size:11.5px;line-height:11.5px;color:#444;right:495.30px;">368</div>
<div class="t" style="top:584.56px;font-size:11.5px;line-height:11.5px;color:#444;right:400.60px;">1</div>
<div class="t" style="top:584.56px;font-size:11.5px;line-height:11.5px;color:#444;right:312.30px;">0<i style="letter-spacing:-1.6px"> </i><i style="font-size:10.4px;letter-spacing:-0.5px">%</i></div>
<div class="t" style="top:584.56px;font-size:11.5px;line-height:11.5px;color:#444;right:218.60px;">13</div>
<div class="t" style="top:584.56px;font-size:11.5px;line-height:11.5px;color:#444;right:136.00px;">12:37</div>
<div class="t" style="top:584.56px;font-size:11.5px;line-height:11.5px;color:#444;right:12.60px;">368</div>
<div class="r" style="left:101.6px;top:621.5px;width:13px;height:12.4px;box-sizing:border-box;background:#fff;border:1px solid #e1e1e1;border-radius:3px"></div>
<div class="t" style="top:623.39px;font-size:11.5px;line-height:11.5px;color:#3a3a3a;left:124.0px;">купить кухонный гарнитур в санкт петербурге недорого икеа</div>
<div class="t" style="top:619.99px;font-size:11.5px;line-height:11.5px;color:#444;right:908.70px;">100<i style="letter-spacing:-1.6px"> </i><i style="font-size:10.4px;letter-spacing:-0.5px">%</i></div>
<div class="t" style="top:619.99px;font-size:11.5px;line-height:11.5px;color:#444;right:791.60px;">1</div>
<div class="t" style="top:619.99px;font-size:11.5px;line-height:11.5px;color:#444;right:694.10px;">1</div>
<div class="t" style="top:619.99px;font-size:11.5px;line-height:11.5px;color:#444;right:596.70px;">1</div>
<div class="t" style="top:619.99px;font-size:11.5px;line-height:11.5px;color:#444;right:495.30px;">0</div>
<div class="t" style="top:619.99px;font-size:11.5px;line-height:11.5px;color:#444;right:400.60px;">1</div>
<div class="t" style="top:619.99px;font-size:11.5px;line-height:11.5px;color:#444;right:312.30px;">0<i style="letter-spacing:-1.6px"> </i><i style="font-size:10.4px;letter-spacing:-0.5px">%</i></div>
<div class="t" style="top:619.99px;font-size:11.5px;line-height:11.5px;color:#444;right:218.60px;">10</div>
<div class="t" style="top:619.99px;font-size:11.5px;line-height:11.5px;color:#444;right:136.00px;">14:52</div>
<div class="t" style="top:619.99px;font-size:11.5px;line-height:11.5px;color:#444;right:12.60px;">0</div>
<div class="r" style="left:101.6px;top:657.0px;width:13px;height:12.4px;box-sizing:border-box;background:#fff;border:1px solid #e1e1e1;border-radius:3px"></div>
<div class="t" style="top:658.82px;font-size:11.5px;line-height:11.5px;color:#3a3a3a;left:124.0px;">кухня в стиле лофт</div>
<div class="t" style="top:655.42px;font-size:11.5px;line-height:11.5px;color:#444;right:908.70px;">33<i style="letter-spacing:-0.5px">,</i>3<i style="letter-spacing:-1.6px"> </i><i style="font-size:10.4px;letter-spacing:-0.5px">%</i></div>
<div class="t" style="top:655.42px;font-size:11.5px;line-height:11.5px;color:#444;right:791.60px;">1</div>
<div class="t" style="top:655.42px;font-size:11.5px;line-height:11.5px;color:#444;right:694.10px;">1</div>
<div class="t" style="top:655.42px;font-size:11.5px;line-height:11.5px;color:#444;right:596.70px;">1</div>
<div class="t" style="top:655.42px;font-size:11.5px;line-height:11.5px;color:#444;right:495.30px;">0</div>
<div class="t" style="top:655.42px;font-size:11.5px;line-height:11.5px;color:#444;right:400.60px;">3</div>
<div class="t" style="top:655.42px;font-size:11.5px;line-height:11.5px;color:#444;right:312.30px;">0<i style="letter-spacing:-1.6px"> </i><i style="font-size:10.4px;letter-spacing:-0.5px">%</i></div>
<div class="t" style="top:655.42px;font-size:11.5px;line-height:11.5px;color:#444;right:218.60px;">1</div>
<div class="t" style="top:655.42px;font-size:11.5px;line-height:11.5px;color:#444;right:136.00px;">4:02</div>
<div class="t" style="top:655.42px;font-size:11.5px;line-height:11.5px;color:#444;right:12.60px;">0</div>
<div class="r" style="left:101.6px;top:692.4px;width:13px;height:12.4px;box-sizing:border-box;background:#fff;border:1px solid #e1e1e1;border-radius:3px"></div>
<div class="t" style="top:694.25px;font-size:11.5px;line-height:11.5px;color:#3a3a3a;left:124.0px;">кухонный гарнитур</div>
<div class="t" style="top:690.85px;font-size:11.5px;line-height:11.5px;color:#444;right:908.70px;">16<i style="letter-spacing:-0.5px">,</i>7<i style="letter-spacing:-1.6px"> </i><i style="font-size:10.4px;letter-spacing:-0.5px">%</i></div>
<div class="t" style="top:690.85px;font-size:11.5px;line-height:11.5px;color:#444;right:791.60px;">1</div>
<div class="t" style="top:690.85px;font-size:11.5px;line-height:11.5px;color:#444;right:694.10px;">1</div>
<div class="t" style="top:690.85px;font-size:11.5px;line-height:11.5px;color:#444;right:596.70px;">1</div>
<div class="t" style="top:690.85px;font-size:11.5px;line-height:11.5px;color:#444;right:495.30px;">0</div>
<div class="t" style="top:690.85px;font-size:11.5px;line-height:11.5px;color:#444;right:400.60px;">5</div>
<div class="t" style="top:690.85px;font-size:11.5px;line-height:11.5px;color:#444;right:312.30px;">0<i style="letter-spacing:-1.6px"> </i><i style="font-size:10.4px;letter-spacing:-0.5px">%</i></div>
<div class="t" style="top:690.85px;font-size:11.5px;line-height:11.5px;color:#444;right:218.60px;">1</div>
<div class="t" style="top:690.85px;font-size:11.5px;line-height:11.5px;color:#444;right:136.00px;">0:57</div>
<div class="t" style="top:690.85px;font-size:11.5px;line-height:11.5px;color:#444;right:12.60px;">0</div>
<div class="r" style="left:101.6px;top:727.8px;width:13px;height:12.4px;box-sizing:border-box;background:#fff;border:1px solid #e1e1e1;border-radius:3px"></div>
<div class="t" style="top:729.68px;font-size:11.5px;line-height:11.5px;color:#3a3a3a;left:124.0px;">кухонный гарнитур бийск цена</div>
<div class="t" style="top:726.28px;font-size:11.5px;line-height:11.5px;color:#444;right:908.70px;">100<i style="letter-spacing:-1.6px"> </i><i style="font-size:10.4px;letter-spacing:-0.5px">%</i></div>
<div class="t" style="top:726.28px;font-size:11.5px;line-height:11.5px;color:#444;right:791.60px;">1</div>
<div class="t" style="top:726.28px;font-size:11.5px;line-height:11.5px;color:#444;right:694.10px;">1</div>
<div class="t" style="top:726.28px;font-size:11.5px;line-height:11.5px;color:#444;right:596.70px;">1</div>
<div class="t" style="top:726.28px;font-size:11.5px;line-height:11.5px;color:#444;right:495.30px;">0</div>
<div class="t" style="top:726.28px;font-size:11.5px;line-height:11.5px;color:#444;right:400.60px;">1</div>
<div class="t" style="top:726.28px;font-size:11.5px;line-height:11.5px;color:#444;right:312.30px;">0<i style="letter-spacing:-1.6px"> </i><i style="font-size:10.4px;letter-spacing:-0.5px">%</i></div>
<div class="t" style="top:726.28px;font-size:11.5px;line-height:11.5px;color:#444;right:218.60px;">1</div>
<div class="t" style="top:726.28px;font-size:11.5px;line-height:11.5px;color:#444;right:136.00px;">0:27</div>
<div class="t" style="top:726.28px;font-size:11.5px;line-height:11.5px;color:#444;right:12.60px;">0</div>
<svg style="position:absolute;left:0;top:0" width="1520" height="756" viewBox="0 0 1520 756"><rect x="524.8" y="494.5" width="86.5" height="2.3" rx="1" fill="#fcebdc"/><rect x="524.8" y="494.3" width="13.4" height="2.7" rx="0.8" fill="#f4c08e"/><rect x="632.1" y="494.5" width="96.3" height="2.3" rx="1" fill="#fcebdc"/><rect x="632.1" y="494.3" width="96.3" height="2.7" rx="0.8" fill="#f4c08e"/><rect x="749.8" y="494.5" width="76.1" height="2.3" rx="1" fill="#fcebdc"/><rect x="749.8" y="494.3" width="76.1" height="2.7" rx="0.8" fill="#f4c08e"/><rect x="846.6" y="494.5" width="76.7" height="2.3" rx="1" fill="#fcebdc"/><rect x="846.6" y="494.3" width="76.7" height="2.7" rx="0.8" fill="#f4c08e"/><rect x="944.1" y="494.5" width="80.6" height="2.3" rx="1" fill="#fcebdc"/><rect x="944.1" y="494.3" width="25.8" height="2.7" rx="0.8" fill="#f4c08e"/><rect x="1046.2" y="494.5" width="73.2" height="2.3" rx="1" fill="#fcebdc"/><rect x="1046.2" y="494.3" width="73.2" height="2.7" rx="0.8" fill="#f4c08e"/><rect x="1140.3" y="494.5" width="67.4" height="2.3" rx="1" fill="#fcebdc"/><rect x="1140.3" y="494.3" width="4.4" height="2.7" rx="0.8" fill="#f4c08e"/><rect x="1228.9" y="494.5" width="72.5" height="2.3" rx="1" fill="#fcebdc"/><rect x="1228.9" y="494.3" width="20.3" height="2.7" rx="0.8" fill="#f4c08e"/><rect x="1323.0" y="494.5" width="61.0" height="2.3" rx="1" fill="#fcebdc"/><rect x="1323.0" y="494.3" width="8.8" height="2.7" rx="0.8" fill="#f4c08e"/><rect x="1405.7" y="494.5" width="101.7" height="2.3" rx="1" fill="#fcebdc"/><rect x="1405.7" y="494.3" width="58.5" height="2.7" rx="0.8" fill="#f4c08e"/><rect x="524.8" y="529.9" width="86.5" height="2.3" rx="1" fill="#fcebdc"/><rect x="524.8" y="529.7" width="13.4" height="2.7" rx="0.8" fill="#f4c08e"/><rect x="632.1" y="529.9" width="96.3" height="2.3" rx="1" fill="#fcebdc"/><rect x="632.1" y="529.7" width="1.4" height="2.7" rx="0.8" fill="#f4c08e"/><rect x="749.8" y="529.9" width="76.1" height="2.3" rx="1" fill="#fcebdc"/><rect x="749.8" y="529.7" width="1.7" height="2.7" rx="0.8" fill="#f4c08e"/><rect x="846.6" y="529.9" width="76.7" height="2.3" rx="1" fill="#fcebdc"/><rect x="846.6" y="529.7" width="1.8" height="2.7" rx="0.8" fill="#f4c08e"/><rect x="944.1" y="529.9" width="80.6" height="2.3" rx="1" fill="#fcebdc"/><rect x="944.1" y="529.7" width="18.5" height="2.7" rx="0.8" fill="#f4c08e"/><rect x="1046.2" y="529.9" width="73.2" height="2.3" rx="1" fill="#fcebdc"/><rect x="1046.2" y="529.7" width="1.7" height="2.7" rx="0.8" fill="#f4c08e"/><rect x="1140.3" y="529.9" width="67.4" height="2.3" rx="1" fill="#fcebdc"/><rect x="1228.9" y="529.9" width="72.5" height="2.3" rx="1" fill="#fcebdc"/><rect x="1228.9" y="529.7" width="8.2" height="2.7" rx="0.8" fill="#f4c08e"/><rect x="1323.0" y="529.9" width="61.0" height="2.3" rx="1" fill="#fcebdc"/><rect x="1323.0" y="529.7" width="2.1" height="2.7" rx="0.8" fill="#f4c08e"/><rect x="1405.7" y="529.9" width="101.7" height="2.3" rx="1" fill="#fcebdc"/><rect x="1405.7" y="529.7" width="1.4" height="2.7" rx="0.8" fill="#f4c08e"/><rect x="524.8" y="565.4" width="86.5" height="2.3" rx="1" fill="#fcebdc"/><rect x="524.8" y="565.2" width="13.4" height="2.7" rx="0.8" fill="#f4c08e"/><rect x="632.1" y="565.4" width="96.3" height="2.3" rx="1" fill="#fcebdc"/><rect x="632.1" y="565.2" width="1.4" height="2.7" rx="0.8" fill="#f4c08e"/><rect x="749.8" y="565.4" width="76.1" height="2.3" rx="1" fill="#fcebdc"/><rect x="749.8" y="565.2" width="1.7" height="2.7" rx="0.8" fill="#f4c08e"/><rect x="846.6" y="565.4" width="76.7" height="2.3" rx="1" fill="#fcebdc"/><rect x="846.6" y="565.2" width="1.8" height="2.7" rx="0.8" fill="#f4c08e"/><rect x="944.1" y="565.4" width="80.6" height="2.3" rx="1" fill="#fcebdc"/><rect x="944.1" y="565.2" width="18.5" height="2.7" rx="0.8" fill="#f4c08e"/><rect x="1046.2" y="565.4" width="73.2" height="2.3" rx="1" fill="#fcebdc"/><rect x="1046.2" y="565.2" width="1.7" height="2.7" rx="0.8" fill="#f4c08e"/><rect x="1140.3" y="565.4" width="67.4" height="2.3" rx="1" fill="#fcebdc"/><rect x="1228.9" y="565.4" width="72.5" height="2.3" rx="1" fill="#fcebdc"/><rect x="1228.9" y="565.2" width="8.2" height="2.7" rx="0.8" fill="#f4c08e"/><rect x="1323.0" y="565.4" width="61.0" height="2.3" rx="1" fill="#fcebdc"/><rect x="1323.0" y="565.2" width="2.1" height="2.7" rx="0.8" fill="#f4c08e"/><rect x="1405.7" y="565.4" width="101.7" height="2.3" rx="1" fill="#fcebdc"/><rect x="1405.7" y="565.2" width="1.4" height="2.7" rx="0.8" fill="#f4c08e"/><rect x="524.8" y="600.8" width="86.5" height="2.3" rx="1" fill="#fcebdc"/><rect x="524.8" y="600.6" width="86.5" height="2.7" rx="0.8" fill="#f4c08e"/><rect x="632.1" y="600.8" width="96.3" height="2.3" rx="1" fill="#fcebdc"/><rect x="749.8" y="600.8" width="76.1" height="2.3" rx="1" fill="#fcebdc"/><rect x="846.6" y="600.8" width="76.7" height="2.3" rx="1" fill="#fcebdc"/><rect x="944.1" y="600.8" width="80.6" height="2.3" rx="1" fill="#fcebdc"/><rect x="944.1" y="600.6" width="55.6" height="2.7" rx="0.8" fill="#f4c08e"/><rect x="1046.2" y="600.8" width="73.2" height="2.3" rx="1" fill="#fcebdc"/><rect x="1140.3" y="600.8" width="67.4" height="2.3" rx="1" fill="#fcebdc"/><rect x="1228.9" y="600.8" width="72.5" height="2.3" rx="1" fill="#fcebdc"/><rect x="1228.9" y="600.6" width="22.5" height="2.7" rx="0.8" fill="#f4c08e"/><rect x="1323.0" y="600.8" width="61.0" height="2.3" rx="1" fill="#fcebdc"/><rect x="1323.0" y="600.6" width="7.1" height="2.7" rx="0.8" fill="#f4c08e"/><rect x="1405.7" y="600.8" width="101.7" height="2.3" rx="1" fill="#fcebdc"/><rect x="1405.7" y="600.6" width="1.4" height="2.7" rx="0.8" fill="#f4c08e"/><rect x="524.8" y="636.2" width="86.5" height="2.3" rx="1" fill="#fcebdc"/><rect x="524.8" y="636.0" width="86.5" height="2.7" rx="0.8" fill="#f4c08e"/><rect x="632.1" y="636.2" width="96.3" height="2.3" rx="1" fill="#fcebdc"/><rect x="749.8" y="636.2" width="76.1" height="2.3" rx="1" fill="#fcebdc"/><rect x="846.6" y="636.2" width="76.7" height="2.3" rx="1" fill="#fcebdc"/><rect x="944.1" y="636.2" width="80.6" height="2.3" rx="1" fill="#fcebdc"/><rect x="1046.2" y="636.2" width="73.2" height="2.3" rx="1" fill="#fcebdc"/><rect x="1140.3" y="636.2" width="67.4" height="2.3" rx="1" fill="#fcebdc"/><rect x="1228.9" y="636.2" width="72.5" height="2.3" rx="1" fill="#fcebdc"/><rect x="1228.9" y="636.0" width="17.1" height="2.7" rx="0.8" fill="#f4c08e"/><rect x="1323.0" y="636.2" width="61.0" height="2.3" rx="1" fill="#fcebdc"/><rect x="1323.0" y="636.0" width="8.2" height="2.7" rx="0.8" fill="#f4c08e"/><rect x="1405.7" y="636.2" width="101.7" height="2.3" rx="1" fill="#fcebdc"/><rect x="524.8" y="671.6" width="86.5" height="2.3" rx="1" fill="#fcebdc"/><rect x="524.8" y="671.5" width="86.5" height="2.7" rx="0.8" fill="#f4c08e"/><rect x="632.1" y="671.6" width="96.3" height="2.3" rx="1" fill="#fcebdc"/><rect x="749.8" y="671.6" width="76.1" height="2.3" rx="1" fill="#fcebdc"/><rect x="846.6" y="671.6" width="76.7" height="2.3" rx="1" fill="#fcebdc"/><rect x="944.1" y="671.6" width="80.6" height="2.3" rx="1" fill="#fcebdc"/><rect x="1046.2" y="671.6" width="73.2" height="2.3" rx="1" fill="#fcebdc"/><rect x="1140.3" y="671.6" width="67.4" height="2.3" rx="1" fill="#fcebdc"/><rect x="1228.9" y="671.6" width="72.5" height="2.3" rx="1" fill="#fcebdc"/><rect x="1228.9" y="671.5" width="1.8" height="2.7" rx="0.8" fill="#f4c08e"/><rect x="1323.0" y="671.6" width="61.0" height="2.3" rx="1" fill="#fcebdc"/><rect x="1323.0" y="671.5" width="2.1" height="2.7" rx="0.8" fill="#f4c08e"/><rect x="1405.7" y="671.6" width="101.7" height="2.3" rx="1" fill="#fcebdc"/><rect x="524.8" y="707.1" width="86.5" height="2.3" rx="1" fill="#fcebdc"/><rect x="524.8" y="706.9" width="86.5" height="2.7" rx="0.8" fill="#f4c08e"/><rect x="632.1" y="707.1" width="96.3" height="2.3" rx="1" fill="#fcebdc"/><rect x="749.8" y="707.1" width="76.1" height="2.3" rx="1" fill="#fcebdc"/><rect x="846.6" y="707.1" width="76.7" height="2.3" rx="1" fill="#fcebdc"/><rect x="944.1" y="707.1" width="80.6" height="2.3" rx="1" fill="#fcebdc"/><rect x="1046.2" y="707.1" width="73.2" height="2.3" rx="1" fill="#fcebdc"/><rect x="1140.3" y="707.1" width="67.4" height="2.3" rx="1" fill="#fcebdc"/><rect x="1228.9" y="707.1" width="72.5" height="2.3" rx="1" fill="#fcebdc"/><rect x="1228.9" y="706.9" width="1.8" height="2.7" rx="0.8" fill="#f4c08e"/><rect x="1323.0" y="707.1" width="61.0" height="2.3" rx="1" fill="#fcebdc"/><rect x="1323.0" y="706.9" width="1.4" height="2.7" rx="0.8" fill="#f4c08e"/><rect x="1405.7" y="707.1" width="101.7" height="2.3" rx="1" fill="#fcebdc"/><rect x="524.8" y="742.5" width="86.5" height="2.3" rx="1" fill="#fcebdc"/><rect x="524.8" y="742.3" width="86.5" height="2.7" rx="0.8" fill="#f4c08e"/><rect x="632.1" y="742.5" width="96.3" height="2.3" rx="1" fill="#fcebdc"/><rect x="749.8" y="742.5" width="76.1" height="2.3" rx="1" fill="#fcebdc"/><rect x="846.6" y="742.5" width="76.7" height="2.3" rx="1" fill="#fcebdc"/><rect x="944.1" y="742.5" width="80.6" height="2.3" rx="1" fill="#fcebdc"/><rect x="1046.2" y="742.5" width="73.2" height="2.3" rx="1" fill="#fcebdc"/><rect x="1140.3" y="742.5" width="67.4" height="2.3" rx="1" fill="#fcebdc"/><rect x="1228.9" y="742.5" width="72.5" height="2.3" rx="1" fill="#fcebdc"/><rect x="1228.9" y="742.3" width="1.8" height="2.7" rx="0.8" fill="#f4c08e"/><rect x="1323.0" y="742.5" width="61.0" height="2.3" rx="1" fill="#fcebdc"/><rect x="1405.7" y="742.5" width="101.7" height="2.3" rx="1" fill="#fcebdc"/></svg>
</div><div id="edge"></div></body></html>
